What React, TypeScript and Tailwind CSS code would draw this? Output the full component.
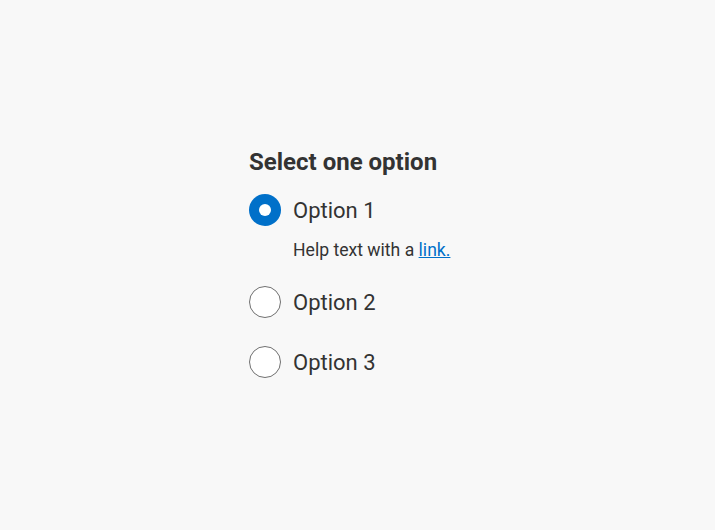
import React from "react";

function Radio({ checked }: { checked?: boolean }) {
  return checked ? (
    <span className="flex h-8 w-8 shrink-0 items-center justify-center rounded-full bg-[#0070c9]">
      <span className="h-3 w-3 rounded-full bg-white" />
    </span>
  ) : (
    <span className="h-8 w-8 shrink-0 rounded-full border-[1.5px] border-[#707070] bg-white" />
  );
}

export default function App() {
  return (
    <div className="min-h-[530px] w-full bg-[#f8f8f8] text-[#333333]" style={{ fontFamily: "Roboto, 'Noto Sans', sans-serif" }}>
      <div className="pl-[249px] pt-[148px]">
        <div className="text-[24px] font-bold leading-7">Select one option</div>
        <div className="mt-[18px] flex flex-col">
          <label className="flex items-start gap-3">
            <Radio checked />
            <span className="text-[22px] leading-[34px]">Option 1</span>
          </label>
          <div className="ml-[44px] mt-[10px] text-[17.6px] leading-6">
            Help text with a <a className="text-[#0070c9] underline" href="#">link.</a>
          </div>
          <label className="mt-[24px] flex items-start gap-3">
            <Radio />
            <span className="text-[22px] leading-[34px]">Option 2</span>
          </label>
          <label className="mt-[26px] flex items-start gap-3">
            <Radio />
            <span className="text-[22px] leading-[34px]">Option 3</span>
          </label>
        </div>
      </div>
    </div>
  );
}
